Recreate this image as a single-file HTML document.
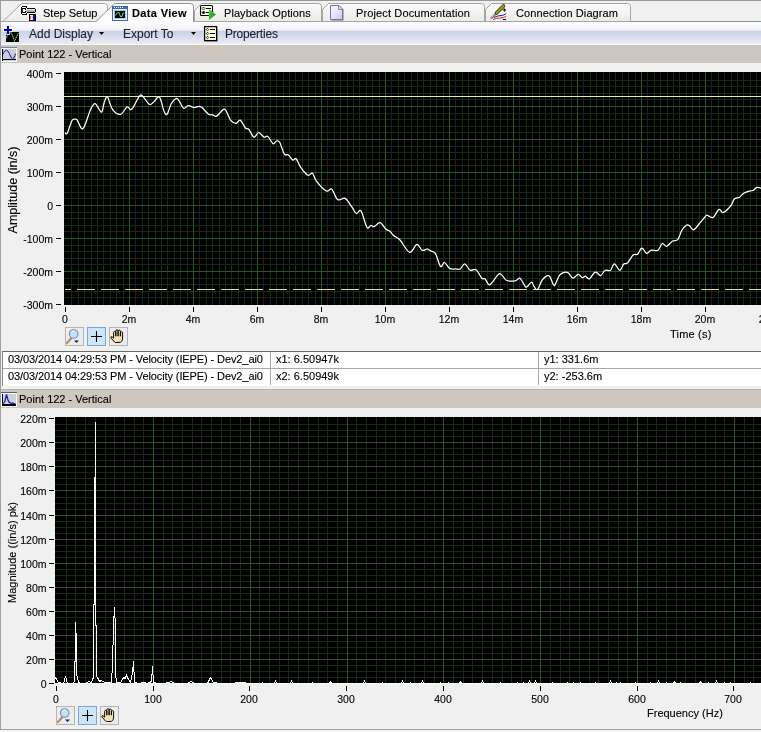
<!DOCTYPE html>
<html><head><meta charset="utf-8">
<style>
*{margin:0;padding:0;box-sizing:border-box}
html,body{width:761px;height:732px;overflow:hidden;background:#f0f0f0;font-family:"Liberation Sans",sans-serif;color:#000;-webkit-font-smoothing:antialiased;-webkit-text-stroke:0.12px currentColor}
#root{position:absolute;left:0;top:0;width:761px;height:732px;will-change:transform}
.a{position:absolute}
.t{position:absolute;font-size:11px;line-height:13px;white-space:nowrap;color:#000}
.yl{position:absolute;font-size:10.5px;line-height:12px;white-space:nowrap;text-align:right;color:#000}
.xl{position:absolute;font-size:10.5px;line-height:12px;width:60px;text-align:center;white-space:nowrap;color:#000}
.tk{position:absolute;background:#000}
.btn{position:absolute;width:19px;height:19px;border:1px solid #b5b5b5;background:#ececec}
.btn.on{border-color:#7ea6d2;background:#cde5f8}
</style></head><body><div id="root">
<!-- outer frame -->
<div class="a" style="left:0;top:0;width:761px;height:1px;background:#989898"></div>
<div class="a" style="left:0;top:0;width:1px;height:730px;background:#a0a0a0"></div>
<div class="a" style="left:0;top:729px;width:761px;height:1px;background:#a0a0a0"></div>
<div class="a" style="left:0;top:730px;width:761px;height:2px;background:#f4f4f4"></div>

<!-- tab strip -->
<div class="a" style="left:1px;top:21px;width:760px;height:1px;background:#8d959c"></div>
<svg class="a" style="left:0;top:0" width="761" height="22">
 <defs>
  <linearGradient id="tg" x1="0" y1="0" x2="0" y2="1"><stop offset="0" stop-color="#fbfbfa"/><stop offset="1" stop-color="#ecebe6"/></linearGradient>
 </defs>
 <!-- Step Setup -->
 <path d="M3,21.5 L21.5,3.5 L104.5,3.5 Q107.5,3.5 107.5,6.5 L107.5,21.5 Z" fill="url(#tg)" stroke="#a3a6a8"/>
 <!-- Playback Options -->
 <path d="M194.5,21.5 L194.5,10.5 L201.5,3.5 L318.5,3.5 Q321.5,3.5 321.5,6.5 L321.5,21.5 Z" fill="url(#tg)" stroke="#a3a6a8"/>
 <!-- Project Documentation -->
 <path d="M322.5,21.5 L322.5,9.5 L328.5,3.5 L481.5,3.5 Q484.5,3.5 484.5,6.5 L484.5,21.5 Z" fill="url(#tg)" stroke="#a3a6a8"/>
 <!-- Connection Diagram -->
 <path d="M485.5,21.5 L485.5,9.5 L491.5,3.5 L627.5,3.5 Q630.5,3.5 630.5,6.5 L630.5,21.5 Z" fill="url(#tg)" stroke="#a3a6a8"/>
 <!-- Data View active -->
 <path d="M95.5,22 L114.5,3.5 L190.5,3.5 Q193.5,3.5 193.5,6.5 L193.5,22" fill="#fcfcfc" stroke="#8d959c"/>
 <!-- icons: wrench -->
 <defs>
  <linearGradient id="wg" x1="0" y1="0" x2="0" y2="1"><stop offset="0" stop-color="#f4f4f4"/><stop offset="1" stop-color="#8c8c8c"/></linearGradient>
  <linearGradient id="dg" x1="0" y1="0" x2="1" y2="1"><stop offset="0" stop-color="#ffffff"/><stop offset="1" stop-color="#c8c8f0"/></linearGradient>
  <linearGradient id="ag" x1="0" y1="0" x2="1" y2="1"><stop offset="0" stop-color="#40e040"/><stop offset="1" stop-color="#108a10"/></linearGradient>
 </defs>
 <g shape-rendering="crispEdges">
  <rect x="22" y="6" width="5" height="1" fill="#000"/>
  <rect x="21" y="7" width="1" height="7" fill="#000"/>
  <rect x="22" y="14" width="5" height="1" fill="#000"/>
  <rect x="22" y="7" width="5" height="7" fill="#fff"/>
  <rect x="22" y="8" width="1" height="5" fill="#222"/>
  <rect x="23" y="8" width="3" height="1" fill="#000"/>
  <rect x="23" y="12" width="3" height="1" fill="#000"/>
  <rect x="26" y="7" width="1" height="1" fill="#000"/>
  <rect x="26" y="13" width="1" height="1" fill="#000"/>
  <rect x="25" y="9" width="1" height="1" fill="#000"/>
  <rect x="25" y="11" width="1" height="1" fill="#000"/>
  <rect x="27" y="8" width="8" height="1" fill="#000"/>
  <rect x="27" y="12" width="8" height="1" fill="#000"/>
  <rect x="26" y="9" width="9" height="3" fill="url(#wg)"/>
  <rect x="35" y="9" width="1" height="3" fill="#000"/>
  <rect x="29" y="14" width="7" height="7" fill="#000"/>
  <rect x="30" y="15" width="5" height="5" fill="#ece4ee"/>
  <rect x="30" y="16" width="1" height="3" fill="#d85050"/>
  <rect x="33" y="15" width="2" height="5" fill="#101890"/>
  <rect x="32" y="17" width="1" height="1" fill="#b0a8d0"/>
 </g>
 <!-- data view icon -->
 <g shape-rendering="crispEdges">
  <rect x="112" y="6" width="16" height="15" rx="1" fill="#3a6cb0"/>
  <rect x="113" y="9" width="14" height="11" fill="#e8f4ff"/>
  <rect x="114" y="10" width="12" height="9" fill="#a9c6e6"/>
  <rect x="115" y="11" width="10" height="7" fill="#000"/>
  <rect x="114" y="7" width="1" height="1" fill="#fff"/><rect x="116" y="7" width="1" height="1" fill="#fff"/><rect x="118" y="7" width="1" height="1" fill="#fff"/><rect x="120" y="7" width="1" height="1" fill="#fff"/><rect x="122" y="7" width="1" height="1" fill="#fff"/>
 </g>
 <path d="M115.5,15.5 L117,13 L119,12.5 L120.5,16.5 L122,16.5 L123,13 L124.5,13" fill="none" stroke="#7be07b" stroke-width="1"/>
 <!-- playback icon -->
 <rect x="200.5" y="5.5" width="12" height="10" rx="1" fill="#ffffe8" stroke="#000" stroke-width="1.1"/>
 <path d="M203.5,7 l1.5,1.5 l-1.5,1.5 l-1.5,-1.5 z" fill="#fff" stroke="#000" stroke-width="0.8"/>
 <path d="M203.5,11 l1.5,1.5 l-1.5,1.5 l-1.5,-1.5 z" fill="#000" stroke="#000" stroke-width="0.8"/>
 <path d="M206,8.5 h5 M206,12.5 h3" stroke="#000" stroke-width="1"/>
 <path d="M209,9 L216,14.5 L209,20 Z" fill="url(#ag)"/>
 <!-- doc icon -->
 <path d="M331.5,5.5 L339.5,5.5 L343.5,9.5 L343.5,20.5 L331.5,20.5 Z" fill="#6a6a9a"/>
 <path d="M330.5,5.5 L338.5,5.5 L342.5,9.5 L342.5,19.5 L330.5,19.5 Z" fill="url(#dg)" stroke="#7272a8" stroke-width="1"/>
 <path d="M338.5,5.5 L338.5,9.5 L342.5,9.5" fill="#d8d8f0" stroke="#7272a8" stroke-width="0.8"/>
 <!-- connection icon -->
 <path d="M491,18.5 L497,12.5" stroke="#707070" stroke-width="2"/>
 <path d="M491.5,17.5 L496.5,12.5" stroke="#d8d8c8" stroke-width="0.8"/>
 <path d="M496.5,13 L503.5,6" stroke="#2a2a00" stroke-width="3.6" stroke-linecap="round"/>
 <path d="M496.5,13 L503.5,6" stroke="#a0a020" stroke-width="2.2" stroke-linecap="round"/>
 <path d="M494,17.5 Q498,15.5 501,15.5 T506,13.5" fill="none" stroke="#1c1ca8" stroke-width="1"/>
 <path d="M493,19.5 Q497,18 500,18 T506,16.5" fill="none" stroke="#d83030" stroke-width="1"/>
 <path d="M503,10 h3 M504.5,8.5 v3 M503,19.5 h3" stroke="#000" stroke-width="1.1"/>
</svg>
<div class="t" style="left:43px;top:7px">Step Setup</div>
<div class="t" style="left:132px;top:7px;font-weight:bold;letter-spacing:0.35px">Data View</div>
<div class="t" style="left:224px;top:7px;letter-spacing:0.07px">Playback Options</div>
<div class="t" style="left:356px;top:7px;letter-spacing:0.13px">Project Documentation</div>
<div class="t" style="left:516px;top:7px;letter-spacing:0.1px">Connection Diagram</div>

<!-- toolbar -->
<div class="a" style="left:1px;top:22px;width:760px;height:23px;background:linear-gradient(#fdfdfe 0px,#f1f2f8 8px,#cdd1e5 9.5px,#d5d8ea 13px,#e6e8f2 20px,#eceef5 22px,#fafafc 22px)"></div>
<svg class="a" style="left:0;top:22px" width="240" height="23">
 <rect x="6" y="10" width="13" height="10" fill="#000"/>
 <path d="M6.5,16 Q8,10 11.5,11 L14.5,19 L18.5,11" fill="none" stroke="#74d074" stroke-width="1.1" stroke-dasharray="1.6,0.6"/>
 <path d="M3,8 h10 M8,3 v10" stroke="#fff" stroke-width="3.6" opacity="0.85"/>
 <path d="M4,8 h8 M8,4 v8" stroke="#0000b0" stroke-width="2.1"/>
 <path d="M99,10 h5 l-2.5,3 z" fill="#000"/>
 <path d="M191,10 h5 l-2.5,3 z" fill="#000"/>
 <rect x="204.6" y="4.6" width="12" height="14" fill="#ffffe4" stroke="#000" stroke-width="1.3"/>
 <path d="M207.5,6.2 l1.3,1.3 l-1.3,1.3 l-1.3,-1.3 z M207.5,10.2 l1.3,1.3 l-1.3,1.3 l-1.3,-1.3 z M207.5,14.2 l1.3,1.3 l-1.3,1.3 l-1.3,-1.3 z" fill="#fff" stroke="#000" stroke-width="0.8"/>
 <path d="M210,7.5 h5 M210,11.5 h5 M210,15.5 h5" stroke="#000" stroke-width="1.1"/>
 <path d="M217.5,5.5 v14 h-12" fill="none" stroke="#555" stroke-width="0.8" opacity="0.5"/>
</svg>
<div class="a" style="left:29px;top:27px;font-size:12px;line-height:14px;color:#1e2030;white-space:nowrap">Add Display</div>
<div class="a" style="left:123px;top:27px;font-size:12px;line-height:14px;color:#1e2030;white-space:nowrap">Export To</div>
<div class="a" style="left:225px;top:27px;font-size:12px;line-height:14px;color:#1e2030;white-space:nowrap;letter-spacing:-0.2px">Properties</div>

<!-- header 1 -->
<div class="a" style="left:1px;top:45px;width:760px;height:18px;background:#cec7bd"></div>
<svg class="a" style="left:0;top:45px" width="20" height="18">
 <g shape-rendering="crispEdges">
 <rect x="1" y="2" width="16" height="1" fill="#6688a8"/>
 <rect x="1" y="3" width="16" height="14" fill="#fbfbff"/>
 <rect x="2" y="4" width="14" height="12" fill="#cdcdd6"/>
 <rect x="2" y="4" width="1" height="12" fill="#000"/>
 <rect x="2" y="14" width="14" height="1" fill="#000"/>
 </g>
 <path d="M3,9 Q5.5,3 8.5,7 L12,14 Q13.5,15 15.5,8.5" fill="none" stroke="#1c1ca8" stroke-width="1.2" stroke-dasharray="1.4,0.5"/>
</svg>
<div class="t" style="left:19px;top:48px;color:#000">Point 122 - Vertical</div>

<!-- plot 1 -->
<svg class="a" style="left:0;top:0" width="761" height="310" shape-rendering="crispEdges">
 <rect x="64" y="72" width="697" height="233" fill="#000"/>
 <rect x="71" y="72" width="1" height="233" fill="#172817"/>
<rect x="78" y="72" width="1" height="233" fill="#172817"/>
<rect x="84" y="72" width="1" height="233" fill="#172817"/>
<rect x="91" y="72" width="1" height="233" fill="#172817"/>
<rect x="97" y="72" width="1" height="233" fill="#172817"/>
<rect x="103" y="72" width="1" height="233" fill="#172817"/>
<rect x="110" y="72" width="1" height="233" fill="#172817"/>
<rect x="116" y="72" width="1" height="233" fill="#172817"/>
<rect x="123" y="72" width="1" height="233" fill="#172817"/>
<rect x="135" y="72" width="1" height="233" fill="#172817"/>
<rect x="142" y="72" width="1" height="233" fill="#172817"/>
<rect x="148" y="72" width="1" height="233" fill="#172817"/>
<rect x="155" y="72" width="1" height="233" fill="#172817"/>
<rect x="161" y="72" width="1" height="233" fill="#172817"/>
<rect x="167" y="72" width="1" height="233" fill="#172817"/>
<rect x="174" y="72" width="1" height="233" fill="#172817"/>
<rect x="180" y="72" width="1" height="233" fill="#172817"/>
<rect x="187" y="72" width="1" height="233" fill="#172817"/>
<rect x="199" y="72" width="1" height="233" fill="#172817"/>
<rect x="206" y="72" width="1" height="233" fill="#172817"/>
<rect x="212" y="72" width="1" height="233" fill="#172817"/>
<rect x="219" y="72" width="1" height="233" fill="#172817"/>
<rect x="225" y="72" width="1" height="233" fill="#172817"/>
<rect x="231" y="72" width="1" height="233" fill="#172817"/>
<rect x="238" y="72" width="1" height="233" fill="#172817"/>
<rect x="244" y="72" width="1" height="233" fill="#172817"/>
<rect x="251" y="72" width="1" height="233" fill="#172817"/>
<rect x="263" y="72" width="1" height="233" fill="#172817"/>
<rect x="270" y="72" width="1" height="233" fill="#172817"/>
<rect x="276" y="72" width="1" height="233" fill="#172817"/>
<rect x="283" y="72" width="1" height="233" fill="#172817"/>
<rect x="289" y="72" width="1" height="233" fill="#172817"/>
<rect x="295" y="72" width="1" height="233" fill="#172817"/>
<rect x="302" y="72" width="1" height="233" fill="#172817"/>
<rect x="308" y="72" width="1" height="233" fill="#172817"/>
<rect x="315" y="72" width="1" height="233" fill="#172817"/>
<rect x="327" y="72" width="1" height="233" fill="#172817"/>
<rect x="334" y="72" width="1" height="233" fill="#172817"/>
<rect x="340" y="72" width="1" height="233" fill="#172817"/>
<rect x="347" y="72" width="1" height="233" fill="#172817"/>
<rect x="353" y="72" width="1" height="233" fill="#172817"/>
<rect x="359" y="72" width="1" height="233" fill="#172817"/>
<rect x="366" y="72" width="1" height="233" fill="#172817"/>
<rect x="372" y="72" width="1" height="233" fill="#172817"/>
<rect x="379" y="72" width="1" height="233" fill="#172817"/>
<rect x="391" y="72" width="1" height="233" fill="#172817"/>
<rect x="398" y="72" width="1" height="233" fill="#172817"/>
<rect x="404" y="72" width="1" height="233" fill="#172817"/>
<rect x="411" y="72" width="1" height="233" fill="#172817"/>
<rect x="417" y="72" width="1" height="233" fill="#172817"/>
<rect x="423" y="72" width="1" height="233" fill="#172817"/>
<rect x="430" y="72" width="1" height="233" fill="#172817"/>
<rect x="436" y="72" width="1" height="233" fill="#172817"/>
<rect x="443" y="72" width="1" height="233" fill="#172817"/>
<rect x="455" y="72" width="1" height="233" fill="#172817"/>
<rect x="462" y="72" width="1" height="233" fill="#172817"/>
<rect x="468" y="72" width="1" height="233" fill="#172817"/>
<rect x="475" y="72" width="1" height="233" fill="#172817"/>
<rect x="481" y="72" width="1" height="233" fill="#172817"/>
<rect x="487" y="72" width="1" height="233" fill="#172817"/>
<rect x="494" y="72" width="1" height="233" fill="#172817"/>
<rect x="500" y="72" width="1" height="233" fill="#172817"/>
<rect x="507" y="72" width="1" height="233" fill="#172817"/>
<rect x="519" y="72" width="1" height="233" fill="#172817"/>
<rect x="526" y="72" width="1" height="233" fill="#172817"/>
<rect x="532" y="72" width="1" height="233" fill="#172817"/>
<rect x="539" y="72" width="1" height="233" fill="#172817"/>
<rect x="545" y="72" width="1" height="233" fill="#172817"/>
<rect x="551" y="72" width="1" height="233" fill="#172817"/>
<rect x="558" y="72" width="1" height="233" fill="#172817"/>
<rect x="564" y="72" width="1" height="233" fill="#172817"/>
<rect x="571" y="72" width="1" height="233" fill="#172817"/>
<rect x="583" y="72" width="1" height="233" fill="#172817"/>
<rect x="590" y="72" width="1" height="233" fill="#172817"/>
<rect x="596" y="72" width="1" height="233" fill="#172817"/>
<rect x="603" y="72" width="1" height="233" fill="#172817"/>
<rect x="609" y="72" width="1" height="233" fill="#172817"/>
<rect x="615" y="72" width="1" height="233" fill="#172817"/>
<rect x="622" y="72" width="1" height="233" fill="#172817"/>
<rect x="628" y="72" width="1" height="233" fill="#172817"/>
<rect x="635" y="72" width="1" height="233" fill="#172817"/>
<rect x="647" y="72" width="1" height="233" fill="#172817"/>
<rect x="654" y="72" width="1" height="233" fill="#172817"/>
<rect x="660" y="72" width="1" height="233" fill="#172817"/>
<rect x="667" y="72" width="1" height="233" fill="#172817"/>
<rect x="673" y="72" width="1" height="233" fill="#172817"/>
<rect x="679" y="72" width="1" height="233" fill="#172817"/>
<rect x="686" y="72" width="1" height="233" fill="#172817"/>
<rect x="692" y="72" width="1" height="233" fill="#172817"/>
<rect x="699" y="72" width="1" height="233" fill="#172817"/>
<rect x="711" y="72" width="1" height="233" fill="#172817"/>
<rect x="718" y="72" width="1" height="233" fill="#172817"/>
<rect x="724" y="72" width="1" height="233" fill="#172817"/>
<rect x="731" y="72" width="1" height="233" fill="#172817"/>
<rect x="737" y="72" width="1" height="233" fill="#172817"/>
<rect x="743" y="72" width="1" height="233" fill="#172817"/>
<rect x="750" y="72" width="1" height="233" fill="#172817"/>
<rect x="756" y="72" width="1" height="233" fill="#172817"/>
<rect x="64" y="80" width="697" height="1" fill="#172817"/>
<rect x="64" y="86" width="697" height="1" fill="#172817"/>
<rect x="64" y="93" width="697" height="1" fill="#172817"/>
<rect x="64" y="99" width="697" height="1" fill="#172817"/>
<rect x="64" y="113" width="697" height="1" fill="#172817"/>
<rect x="64" y="119" width="697" height="1" fill="#172817"/>
<rect x="64" y="126" width="697" height="1" fill="#172817"/>
<rect x="64" y="132" width="697" height="1" fill="#172817"/>
<rect x="64" y="146" width="697" height="1" fill="#172817"/>
<rect x="64" y="152" width="697" height="1" fill="#172817"/>
<rect x="64" y="159" width="697" height="1" fill="#172817"/>
<rect x="64" y="165" width="697" height="1" fill="#172817"/>
<rect x="64" y="179" width="697" height="1" fill="#172817"/>
<rect x="64" y="185" width="697" height="1" fill="#172817"/>
<rect x="64" y="192" width="697" height="1" fill="#172817"/>
<rect x="64" y="198" width="697" height="1" fill="#172817"/>
<rect x="64" y="212" width="697" height="1" fill="#172817"/>
<rect x="64" y="218" width="697" height="1" fill="#172817"/>
<rect x="64" y="225" width="697" height="1" fill="#172817"/>
<rect x="64" y="231" width="697" height="1" fill="#172817"/>
<rect x="64" y="245" width="697" height="1" fill="#172817"/>
<rect x="64" y="251" width="697" height="1" fill="#172817"/>
<rect x="64" y="258" width="697" height="1" fill="#172817"/>
<rect x="64" y="264" width="697" height="1" fill="#172817"/>
<rect x="64" y="278" width="697" height="1" fill="#172817"/>
<rect x="64" y="284" width="697" height="1" fill="#172817"/>
<rect x="64" y="291" width="697" height="1" fill="#172817"/>
<rect x="64" y="297" width="697" height="1" fill="#172817"/>
<rect x="129" y="72" width="1" height="233" fill="#285628"/>
<rect x="193" y="72" width="1" height="233" fill="#285628"/>
<rect x="257" y="72" width="1" height="233" fill="#285628"/>
<rect x="321" y="72" width="1" height="233" fill="#285628"/>
<rect x="385" y="72" width="1" height="233" fill="#285628"/>
<rect x="449" y="72" width="1" height="233" fill="#285628"/>
<rect x="513" y="72" width="1" height="233" fill="#285628"/>
<rect x="577" y="72" width="1" height="233" fill="#285628"/>
<rect x="641" y="72" width="1" height="233" fill="#285628"/>
<rect x="705" y="72" width="1" height="233" fill="#285628"/>
<rect x="64" y="106" width="697" height="1" fill="#285628"/>
<rect x="64" y="139" width="697" height="1" fill="#285628"/>
<rect x="64" y="172" width="697" height="1" fill="#285628"/>
<rect x="64" y="205" width="697" height="1" fill="#285628"/>
<rect x="64" y="238" width="697" height="1" fill="#285628"/>
<rect x="64" y="271" width="697" height="1" fill="#285628"/>
 <rect x="64" y="96" width="697" height="1" fill="#dde9b6"/>
 <rect x="65" y="289" width="6" height="1" fill="#d8e0a8"/>
<rect x="77" y="289" width="18" height="1" fill="#d8e0a8"/>
<rect x="101" y="289" width="18" height="1" fill="#d8e0a8"/>
<rect x="125" y="289" width="18" height="1" fill="#d8e0a8"/>
<rect x="149" y="289" width="18" height="1" fill="#d8e0a8"/>
<rect x="173" y="289" width="18" height="1" fill="#d8e0a8"/>
<rect x="197" y="289" width="18" height="1" fill="#d8e0a8"/>
<rect x="221" y="289" width="18" height="1" fill="#d8e0a8"/>
<rect x="245" y="289" width="18" height="1" fill="#d8e0a8"/>
<rect x="269" y="289" width="18" height="1" fill="#d8e0a8"/>
<rect x="293" y="289" width="18" height="1" fill="#d8e0a8"/>
<rect x="317" y="289" width="18" height="1" fill="#d8e0a8"/>
<rect x="341" y="289" width="18" height="1" fill="#d8e0a8"/>
<rect x="365" y="289" width="18" height="1" fill="#d8e0a8"/>
<rect x="389" y="289" width="18" height="1" fill="#d8e0a8"/>
<rect x="413" y="289" width="18" height="1" fill="#d8e0a8"/>
<rect x="437" y="289" width="18" height="1" fill="#d8e0a8"/>
<rect x="461" y="289" width="18" height="1" fill="#d8e0a8"/>
<rect x="485" y="289" width="18" height="1" fill="#d8e0a8"/>
<rect x="509" y="289" width="18" height="1" fill="#d8e0a8"/>
<rect x="533" y="289" width="18" height="1" fill="#d8e0a8"/>
<rect x="557" y="289" width="18" height="1" fill="#d8e0a8"/>
<rect x="581" y="289" width="18" height="1" fill="#d8e0a8"/>
<rect x="605" y="289" width="18" height="1" fill="#d8e0a8"/>
<rect x="629" y="289" width="18" height="1" fill="#d8e0a8"/>
<rect x="653" y="289" width="18" height="1" fill="#d8e0a8"/>
<rect x="677" y="289" width="18" height="1" fill="#d8e0a8"/>
<rect x="701" y="289" width="18" height="1" fill="#d8e0a8"/>
<rect x="725" y="289" width="18" height="1" fill="#d8e0a8"/>
<rect x="749" y="289" width="18" height="1" fill="#d8e0a8"/>
</svg>
<svg class="a" style="left:0;top:0" width="761" height="310">
 <path d="M65.00,132.60 C65.38,132.70 66.15,135.18 67.30,133.20 C68.45,131.22 70.58,123.03 71.90,120.70 C73.22,118.37 74.33,119.32 75.20,119.20 C76.07,119.08 75.80,118.43 77.10,120.00 C78.40,121.57 80.80,130.23 83.00,128.60 C85.20,126.97 88.32,114.35 90.30,110.20 C92.28,106.05 93.27,103.58 94.90,103.70 C96.53,103.82 98.90,109.60 100.10,110.90 C101.30,112.20 101.43,112.82 102.10,111.50 C102.77,110.18 103.22,105.40 104.10,103.00 C104.98,100.60 105.98,96.00 107.40,97.10 C108.82,98.20 110.42,106.72 112.60,109.60 C114.78,112.48 118.08,114.85 120.50,114.40 C122.92,113.95 125.45,107.70 127.10,106.90 C128.75,106.10 129.42,109.48 130.40,109.60 C131.38,109.72 131.47,109.90 133.00,107.60 C134.53,105.30 137.97,97.67 139.60,95.80 C141.23,93.93 141.17,94.98 142.80,96.40 C144.43,97.82 147.63,103.32 149.40,104.30 C151.17,105.28 151.75,103.50 153.40,102.30 C155.05,101.10 157.55,95.67 159.30,97.10 C161.05,98.53 162.80,108.02 163.90,110.90 C165.00,113.78 165.23,114.07 165.90,114.40 C166.57,114.73 167.02,114.68 167.90,112.90 C168.78,111.12 169.78,106.12 171.20,103.70 C172.62,101.28 175.08,98.85 176.40,98.40 C177.72,97.95 177.88,99.35 179.10,101.00 C180.32,102.65 182.17,107.53 183.70,108.30 C185.23,109.07 186.55,105.72 188.30,105.60 C190.05,105.48 192.45,107.48 194.20,107.60 C195.95,107.72 197.50,106.30 198.80,106.30 C200.10,106.30 200.37,106.28 202.00,107.60 C203.63,108.92 206.83,113.00 208.60,114.20 C210.37,115.40 211.28,114.48 212.60,114.80 C213.92,115.12 214.75,116.97 216.50,116.10 C218.25,115.23 221.57,110.58 223.10,109.60 C224.63,108.62 224.38,108.35 225.70,110.20 C227.02,112.05 229.25,118.50 231.00,120.70 C232.75,122.90 234.67,123.50 236.20,123.40 C237.73,123.30 238.67,119.33 240.20,120.10 C241.73,120.87 243.98,126.47 245.40,128.00 C246.82,129.53 247.27,127.77 248.70,129.30 C250.13,130.83 252.35,136.67 254.00,137.20 C255.65,137.73 256.95,132.52 258.60,132.50 C260.25,132.48 262.37,136.45 263.90,137.10 C265.43,137.75 266.27,135.30 267.80,136.40 C269.33,137.50 271.67,142.93 273.10,143.70 C274.53,144.47 275.30,141.23 276.40,141.00 C277.50,140.77 278.38,140.10 279.70,142.30 C281.02,144.50 282.88,152.12 284.30,154.20 C285.72,156.28 286.78,153.82 288.20,154.80 C289.62,155.78 291.48,159.43 292.80,160.10 C294.12,160.77 294.78,157.60 296.10,158.80 C297.42,160.00 298.73,164.57 300.70,167.30 C302.67,170.03 305.93,174.22 307.90,175.20 C309.87,176.18 311.08,172.22 312.50,173.20 C313.92,174.18 314.10,178.13 316.40,181.10 C318.70,184.07 323.77,189.68 326.30,191.00 C328.83,192.32 329.85,187.70 331.60,189.00 C333.35,190.30 335.40,197.02 336.80,198.80 C338.20,200.58 338.58,199.77 340.00,199.70 C341.42,199.63 343.33,197.20 345.30,198.40 C347.27,199.60 349.95,204.38 351.80,206.90 C353.65,209.42 354.87,212.83 356.40,213.50 C357.93,214.17 359.25,208.60 361.00,210.90 C362.75,213.20 365.25,224.90 366.90,227.30 C368.55,229.70 369.68,225.42 370.90,225.30 C372.12,225.18 372.67,227.03 374.20,226.60 C375.73,226.17 378.13,222.25 380.10,222.70 C382.07,223.15 384.37,227.88 386.00,229.30 C387.63,230.72 388.58,230.12 389.90,231.20 C391.22,232.28 392.25,234.37 393.90,235.80 C395.55,237.23 397.18,237.05 399.80,239.80 C402.42,242.55 406.75,251.53 409.60,252.30 C412.45,253.07 414.82,244.73 416.90,244.40 C418.98,244.07 420.35,249.53 422.10,250.30 C423.85,251.07 426.08,248.95 427.40,249.00 C428.72,249.05 428.68,249.88 430.00,250.60 C431.32,251.32 433.55,250.67 435.30,253.30 C437.05,255.93 438.97,264.87 440.50,266.40 C442.03,267.93 442.97,262.17 444.50,262.50 C446.03,262.83 447.85,267.32 449.70,268.40 C451.55,269.48 453.85,268.90 455.60,269.00 C457.35,269.10 458.67,269.87 460.20,269.00 C461.73,268.13 463.15,263.58 464.80,263.80 C466.45,264.02 468.23,269.32 470.10,270.30 C471.97,271.28 474.03,268.38 476.00,269.70 C477.97,271.02 480.37,276.67 481.90,278.20 C483.43,279.73 483.88,277.80 485.20,278.90 C486.52,280.00 487.40,285.68 489.80,284.80 C492.20,283.92 496.87,274.37 499.60,273.60 C502.33,272.83 503.57,279.00 506.20,280.20 C508.83,281.40 513.10,281.13 515.40,280.80 C517.70,280.47 518.40,277.32 520.00,278.20 C521.60,279.08 523.83,284.67 525.00,286.10 C526.17,287.53 525.90,287.45 527.00,286.80 C528.10,286.15 530.40,282.20 531.60,282.20 C532.80,282.20 533.22,285.60 534.20,286.80 C535.18,288.00 536.18,290.50 537.50,289.40 C538.82,288.30 540.47,282.50 542.10,280.20 C543.73,277.90 545.98,276.15 547.30,275.60 C548.62,275.05 548.90,275.27 550.00,276.90 C551.10,278.53 552.92,284.42 553.90,285.40 C554.88,286.38 554.92,284.55 555.90,282.80 C556.88,281.05 558.38,276.65 559.80,274.90 C561.22,273.15 562.97,272.62 564.40,272.30 C565.83,271.98 566.97,272.02 568.40,273.00 C569.83,273.98 571.37,277.98 573.00,278.20 C574.63,278.42 576.67,274.40 578.20,274.30 C579.73,274.20 581.00,277.28 582.20,277.60 C583.40,277.92 584.20,275.98 585.40,276.20 C586.60,276.42 587.97,279.43 589.40,278.90 C590.83,278.37 592.80,274.10 594.00,273.00 C595.20,271.90 595.50,271.87 596.60,272.30 C597.70,272.73 599.17,275.93 600.60,275.60 C602.03,275.27 603.57,271.18 605.20,270.30 C606.83,269.42 608.87,271.38 610.40,270.30 C611.93,269.22 612.85,263.80 614.40,263.80 C615.95,263.80 618.15,270.27 619.70,270.30 C621.25,270.33 622.38,265.23 623.70,264.00 C625.02,262.77 626.03,264.40 627.60,262.90 C629.17,261.40 631.45,256.45 633.10,255.00 C634.75,253.55 636.18,255.25 637.50,254.20 C638.82,253.15 640.08,249.62 641.00,248.70 C641.92,247.78 642.08,247.92 643.00,248.70 C643.92,249.48 645.12,253.15 646.50,253.40 C647.88,253.65 649.38,250.73 651.30,250.20 C653.22,249.67 656.17,251.32 658.00,250.20 C659.83,249.08 660.85,244.15 662.30,243.50 C663.75,242.85 664.98,246.72 666.70,246.30 C668.42,245.88 670.75,242.12 672.60,241.00 C674.45,239.88 676.27,241.37 677.80,239.60 C679.33,237.83 680.37,232.80 681.80,230.40 C683.23,228.00 685.10,225.97 686.40,225.20 C687.70,224.43 688.40,225.03 689.60,225.80 C690.80,226.57 691.83,230.33 693.60,229.80 C695.37,229.27 698.57,224.42 700.20,222.60 C701.83,220.78 702.35,220.12 703.40,218.90 C704.45,217.68 705.58,215.77 706.50,215.30 C707.42,214.83 707.78,215.77 708.90,216.10 C710.02,216.43 711.50,218.42 713.20,217.30 C714.90,216.18 717.45,210.18 719.10,209.40 C720.75,208.62 721.12,213.25 723.10,212.60 C725.08,211.95 729.17,207.73 731.00,205.50 C732.83,203.27 732.67,200.58 734.10,199.20 C735.53,197.82 738.02,198.18 739.60,197.20 C741.18,196.22 742.15,194.28 743.60,193.30 C745.05,192.32 746.73,191.77 748.30,191.30 C749.87,190.83 751.55,191.15 753.00,190.50 C754.45,189.85 755.50,187.73 757.00,187.40 C758.50,187.07 761.17,188.32 762.00,188.50" fill="none" stroke="#fff" stroke-width="1.25" stroke-linejoin="round"/>
</svg>
<div class="yl" style="top:68px;right:708px">400m</div>
<div class="tk" style="left:56px;top:73px;width:5px;height:1px"></div>
<div class="yl" style="top:101px;right:708px">300m</div>
<div class="tk" style="left:56px;top:106px;width:5px;height:1px"></div>
<div class="yl" style="top:134px;right:708px">200m</div>
<div class="tk" style="left:56px;top:139px;width:5px;height:1px"></div>
<div class="yl" style="top:167px;right:708px">100m</div>
<div class="tk" style="left:56px;top:172px;width:5px;height:1px"></div>
<div class="yl" style="top:200px;right:708px">0</div>
<div class="tk" style="left:56px;top:205px;width:5px;height:1px"></div>
<div class="yl" style="top:233px;right:708px">-100m</div>
<div class="tk" style="left:56px;top:238px;width:5px;height:1px"></div>
<div class="yl" style="top:266px;right:708px">-200m</div>
<div class="tk" style="left:56px;top:271px;width:5px;height:1px"></div>
<div class="yl" style="top:299px;right:708px">-300m</div>
<div class="tk" style="left:56px;top:304px;width:5px;height:1px"></div>
<div class="xl" style="left:35px;top:313px">0</div>
<div class="tk" style="left:65px;top:307px;width:1px;height:5px"></div>
<div class="xl" style="left:99px;top:313px">2m</div>
<div class="tk" style="left:129px;top:307px;width:1px;height:5px"></div>
<div class="xl" style="left:163px;top:313px">4m</div>
<div class="tk" style="left:193px;top:307px;width:1px;height:5px"></div>
<div class="xl" style="left:227px;top:313px">6m</div>
<div class="tk" style="left:257px;top:307px;width:1px;height:5px"></div>
<div class="xl" style="left:291px;top:313px">8m</div>
<div class="tk" style="left:321px;top:307px;width:1px;height:5px"></div>
<div class="xl" style="left:355px;top:313px">10m</div>
<div class="tk" style="left:385px;top:307px;width:1px;height:5px"></div>
<div class="xl" style="left:419px;top:313px">12m</div>
<div class="tk" style="left:449px;top:307px;width:1px;height:5px"></div>
<div class="xl" style="left:483px;top:313px">14m</div>
<div class="tk" style="left:513px;top:307px;width:1px;height:5px"></div>
<div class="xl" style="left:547px;top:313px">16m</div>
<div class="tk" style="left:577px;top:307px;width:1px;height:5px"></div>
<div class="xl" style="left:611px;top:313px">18m</div>
<div class="tk" style="left:641px;top:307px;width:1px;height:5px"></div>
<div class="xl" style="left:675px;top:313px">20m</div>
<div class="tk" style="left:705px;top:307px;width:1px;height:5px"></div>
<div class="xl" style="left:739px;top:313px">22m</div>
<div class="tk" style="left:769px;top:307px;width:1px;height:5px"></div>
<div class="a" style="left:-37.5px;top:183px;width:100px;text-align:center;transform:rotate(-90deg);font-size:12.5px;line-height:14px;white-space:nowrap">Amplitude (in/s)</div>
<div class="t" style="left:670px;top:328px;letter-spacing:0.2px">Time (s)</div>
<div class="btn" style="left:65px;top:327px"></div>
<div class="btn on" style="left:87px;top:327px"></div>
<div class="btn" style="left:109px;top:327px"></div>
<svg class="a" style="left:65px;top:327px" width="64" height="19">
 <path d="M2,16 L6,11.5" stroke="#c08860" stroke-width="2.2" stroke-linecap="round"/>
 <circle cx="8.7" cy="7" r="4.3" fill="#c6def4" stroke="#6f8fb0" stroke-width="1.1"/>
 <path d="M6.5,5.5 a2.5,2.5 0 0 1 3,-1.5" stroke="#fff" stroke-width="1" fill="none"/>
 <path d="M9,13.5 h5 l-2.5,2.5 z" fill="#14206a"/>
 <path d="M26,9.5 h11 M31.5,4 v11" stroke="#000" stroke-width="1.1"/>
 <path d="M49.5,15 L46,11 Q45.3,9.6 46.8,9.6 L48.6,11.2 L48.6,5.6 Q48.6,4.4 49.7,4.4 Q50.8,4.4 50.8,5.6 L50.8,9.2 L50.8,3.9 Q50.8,2.7 51.95,2.7 Q53.1,2.7 53.1,3.9 L53.1,9.2 L53.1,4.3 Q53.1,3.1 54.25,3.1 Q55.4,3.1 55.4,4.3 L55.4,9.2 L55.4,5.8 Q55.4,4.7 56.5,4.7 Q57.6,4.7 57.6,5.8 L57.6,11 Q57.6,15.5 54,15.5 L50.5,15.5 Z" fill="#f4e2b4" stroke="#000" stroke-width="0.95"/>
</svg>

<!-- table -->
<div class="a" style="left:2px;top:351px;width:759px;height:35px;background:#fff;border-top:1px solid #6a6a6a;border-left:1px solid #8a8a8a"></div>
<div class="a" style="left:3px;top:368px;width:758px;height:1px;background:#a8a8a8"></div>
<div class="a" style="left:270px;top:352px;width:1px;height:33px;background:#a8a8a8"></div>
<div class="a" style="left:538px;top:352px;width:1px;height:33px;background:#a8a8a8"></div>
<div class="t" style="left:8px;top:353px;letter-spacing:-0.1px">03/03/2014 04:29:53 PM - Velocity (IEPE) - Dev2_ai0</div>
<div class="t" style="left:8px;top:370px;letter-spacing:-0.1px">03/03/2014 04:29:53 PM - Velocity (IEPE) - Dev2_ai0</div>
<div class="t" style="left:276px;top:353px">x1: 6.50947k</div>
<div class="t" style="left:276px;top:370px">x2: 6.50949k</div>
<div class="t" style="left:544px;top:353px">y1: 331.6m</div>
<div class="t" style="left:544px;top:370px">y2: -253.6m</div>

<!-- header 2 -->
<div class="a" style="left:1px;top:389px;width:760px;height:1px;background:#b8b4ac"></div>
<div class="a" style="left:1px;top:390px;width:760px;height:18px;background:#cec7bd"></div>
<svg class="a" style="left:0;top:389px" width="20" height="19">
 <g shape-rendering="crispEdges">
 <rect x="1" y="3" width="16" height="1" fill="#4a6680"/>
 <rect x="1" y="4" width="16" height="14" fill="#fbfbff"/>
 <rect x="2" y="5" width="14" height="11" fill="#cfd0dc"/>
 <rect x="2" y="5" width="1" height="12" fill="#000"/>
 <rect x="2" y="15" width="14" height="2" fill="#000"/>
 </g>
 <path d="M3,15 L5,12 L6.5,5.5 L8,11 L9,13 L11,14.5 L12.5,14 L15.5,15" fill="none" stroke="#1c1cb0" stroke-width="1.3"/>
</svg>
<div class="t" style="left:19px;top:393px">Point 122 - Vertical</div>

<!-- plot 2 -->
<svg class="a" style="left:0;top:0" width="761" height="690" shape-rendering="crispEdges">
 <rect x="55" y="417" width="706" height="266" fill="#000"/>
 <rect x="66" y="417" width="1" height="266" fill="#172817"/>
<rect x="75" y="417" width="1" height="266" fill="#172817"/>
<rect x="85" y="417" width="1" height="266" fill="#172817"/>
<rect x="95" y="417" width="1" height="266" fill="#172817"/>
<rect x="105" y="417" width="1" height="266" fill="#172817"/>
<rect x="114" y="417" width="1" height="266" fill="#172817"/>
<rect x="124" y="417" width="1" height="266" fill="#172817"/>
<rect x="134" y="417" width="1" height="266" fill="#172817"/>
<rect x="143" y="417" width="1" height="266" fill="#172817"/>
<rect x="163" y="417" width="1" height="266" fill="#172817"/>
<rect x="172" y="417" width="1" height="266" fill="#172817"/>
<rect x="182" y="417" width="1" height="266" fill="#172817"/>
<rect x="192" y="417" width="1" height="266" fill="#172817"/>
<rect x="201" y="417" width="1" height="266" fill="#172817"/>
<rect x="211" y="417" width="1" height="266" fill="#172817"/>
<rect x="221" y="417" width="1" height="266" fill="#172817"/>
<rect x="230" y="417" width="1" height="266" fill="#172817"/>
<rect x="240" y="417" width="1" height="266" fill="#172817"/>
<rect x="259" y="417" width="1" height="266" fill="#172817"/>
<rect x="269" y="417" width="1" height="266" fill="#172817"/>
<rect x="279" y="417" width="1" height="266" fill="#172817"/>
<rect x="288" y="417" width="1" height="266" fill="#172817"/>
<rect x="298" y="417" width="1" height="266" fill="#172817"/>
<rect x="308" y="417" width="1" height="266" fill="#172817"/>
<rect x="318" y="417" width="1" height="266" fill="#172817"/>
<rect x="327" y="417" width="1" height="266" fill="#172817"/>
<rect x="337" y="417" width="1" height="266" fill="#172817"/>
<rect x="356" y="417" width="1" height="266" fill="#172817"/>
<rect x="366" y="417" width="1" height="266" fill="#172817"/>
<rect x="376" y="417" width="1" height="266" fill="#172817"/>
<rect x="385" y="417" width="1" height="266" fill="#172817"/>
<rect x="395" y="417" width="1" height="266" fill="#172817"/>
<rect x="405" y="417" width="1" height="266" fill="#172817"/>
<rect x="414" y="417" width="1" height="266" fill="#172817"/>
<rect x="424" y="417" width="1" height="266" fill="#172817"/>
<rect x="434" y="417" width="1" height="266" fill="#172817"/>
<rect x="453" y="417" width="1" height="266" fill="#172817"/>
<rect x="463" y="417" width="1" height="266" fill="#172817"/>
<rect x="472" y="417" width="1" height="266" fill="#172817"/>
<rect x="482" y="417" width="1" height="266" fill="#172817"/>
<rect x="492" y="417" width="1" height="266" fill="#172817"/>
<rect x="502" y="417" width="1" height="266" fill="#172817"/>
<rect x="511" y="417" width="1" height="266" fill="#172817"/>
<rect x="521" y="417" width="1" height="266" fill="#172817"/>
<rect x="531" y="417" width="1" height="266" fill="#172817"/>
<rect x="550" y="417" width="1" height="266" fill="#172817"/>
<rect x="560" y="417" width="1" height="266" fill="#172817"/>
<rect x="569" y="417" width="1" height="266" fill="#172817"/>
<rect x="579" y="417" width="1" height="266" fill="#172817"/>
<rect x="589" y="417" width="1" height="266" fill="#172817"/>
<rect x="598" y="417" width="1" height="266" fill="#172817"/>
<rect x="608" y="417" width="1" height="266" fill="#172817"/>
<rect x="618" y="417" width="1" height="266" fill="#172817"/>
<rect x="627" y="417" width="1" height="266" fill="#172817"/>
<rect x="647" y="417" width="1" height="266" fill="#172817"/>
<rect x="656" y="417" width="1" height="266" fill="#172817"/>
<rect x="666" y="417" width="1" height="266" fill="#172817"/>
<rect x="676" y="417" width="1" height="266" fill="#172817"/>
<rect x="685" y="417" width="1" height="266" fill="#172817"/>
<rect x="695" y="417" width="1" height="266" fill="#172817"/>
<rect x="705" y="417" width="1" height="266" fill="#172817"/>
<rect x="715" y="417" width="1" height="266" fill="#172817"/>
<rect x="724" y="417" width="1" height="266" fill="#172817"/>
<rect x="744" y="417" width="1" height="266" fill="#172817"/>
<rect x="753" y="417" width="1" height="266" fill="#172817"/>
<rect x="55" y="424" width="706" height="1" fill="#172817"/>
<rect x="55" y="430" width="706" height="1" fill="#172817"/>
<rect x="55" y="436" width="706" height="1" fill="#172817"/>
<rect x="55" y="448" width="706" height="1" fill="#172817"/>
<rect x="55" y="454" width="706" height="1" fill="#172817"/>
<rect x="55" y="460" width="706" height="1" fill="#172817"/>
<rect x="55" y="472" width="706" height="1" fill="#172817"/>
<rect x="55" y="478" width="706" height="1" fill="#172817"/>
<rect x="55" y="484" width="706" height="1" fill="#172817"/>
<rect x="55" y="497" width="706" height="1" fill="#172817"/>
<rect x="55" y="503" width="706" height="1" fill="#172817"/>
<rect x="55" y="509" width="706" height="1" fill="#172817"/>
<rect x="55" y="521" width="706" height="1" fill="#172817"/>
<rect x="55" y="527" width="706" height="1" fill="#172817"/>
<rect x="55" y="533" width="706" height="1" fill="#172817"/>
<rect x="55" y="545" width="706" height="1" fill="#172817"/>
<rect x="55" y="551" width="706" height="1" fill="#172817"/>
<rect x="55" y="557" width="706" height="1" fill="#172817"/>
<rect x="55" y="569" width="706" height="1" fill="#172817"/>
<rect x="55" y="575" width="706" height="1" fill="#172817"/>
<rect x="55" y="581" width="706" height="1" fill="#172817"/>
<rect x="55" y="593" width="706" height="1" fill="#172817"/>
<rect x="55" y="599" width="706" height="1" fill="#172817"/>
<rect x="55" y="605" width="706" height="1" fill="#172817"/>
<rect x="55" y="617" width="706" height="1" fill="#172817"/>
<rect x="55" y="623" width="706" height="1" fill="#172817"/>
<rect x="55" y="629" width="706" height="1" fill="#172817"/>
<rect x="55" y="641" width="706" height="1" fill="#172817"/>
<rect x="55" y="647" width="706" height="1" fill="#172817"/>
<rect x="55" y="653" width="706" height="1" fill="#172817"/>
<rect x="55" y="665" width="706" height="1" fill="#172817"/>
<rect x="55" y="671" width="706" height="1" fill="#172817"/>
<rect x="55" y="677" width="706" height="1" fill="#172817"/>
<rect x="153" y="417" width="1" height="266" fill="#285628"/>
<rect x="250" y="417" width="1" height="266" fill="#285628"/>
<rect x="347" y="417" width="1" height="266" fill="#285628"/>
<rect x="443" y="417" width="1" height="266" fill="#285628"/>
<rect x="540" y="417" width="1" height="266" fill="#285628"/>
<rect x="637" y="417" width="1" height="266" fill="#285628"/>
<rect x="734" y="417" width="1" height="266" fill="#285628"/>
<rect x="55" y="442" width="706" height="1" fill="#285628"/>
<rect x="55" y="466" width="706" height="1" fill="#285628"/>
<rect x="55" y="490" width="706" height="1" fill="#285628"/>
<rect x="55" y="515" width="706" height="1" fill="#285628"/>
<rect x="55" y="539" width="706" height="1" fill="#285628"/>
<rect x="55" y="563" width="706" height="1" fill="#285628"/>
<rect x="55" y="587" width="706" height="1" fill="#285628"/>
<rect x="55" y="611" width="706" height="1" fill="#285628"/>
<rect x="55" y="635" width="706" height="1" fill="#285628"/>
<rect x="55" y="659" width="706" height="1" fill="#285628"/>
</svg>
<svg class="a" style="left:0;top:0" width="761" height="690">
 <polyline points="55.5,677.5 56.5,679.5 58.5,682.5 63.5,683.5 65.5,676.5 67.5,683.5 72.5,683.5 74.5,681.5 74.5,661.5 75.5,661.5 75.5,622.5 76.5,643.5 76.5,673.5 78.5,682.5 80.5,683.5 85.5,683.5 88.5,681.5 91.5,682.5 92.5,679.5 93.5,677.5 93.5,604.5 94.5,604.5 94.5,477.5 95.5,477.5 95.5,422.5 95.5,625.5 96.5,625.5 96.5,676.5 97.5,677.5 99.5,681.5 101.5,680.5 104.5,682.5 111.5,682.5 112.5,664.5 113.5,625.5 114.5,607.5 115.5,628.5 115.5,673.5 116.5,682.5 120.5,682.5 122.5,679.5 123.5,677.5 125.5,678.5 126.5,674.5 127.5,677.5 128.5,679.5 130.5,682.5 132.5,672.5 133.5,661.5 134.5,682.5 138.5,683.5 143.5,682.5 147.5,683.5 151.5,681.5 152.5,666.5 153.5,682.5 157.5,683.5 164.5,683.5 171.5,681.5 174.5,683.5 186.5,683.5 191.5,681.5 194.5,683.5 207.5,683.5 210.5,677.5 213.5,682.5 220.5,683.5 230.5,683.5 240.5,682.5 250.5,683.5 261.5,683.5 262.5,682.5 263.5,683.5 274.5,683.5 275.5,680.5 276.5,683.5 290.5,683.5 291.5,680.5 292.5,683.5 311.5,683.5 312.5,682.5 313.5,683.5 329.5,683.5 330.5,681.5 331.5,683.5 363.5,683.5 364.5,680.5 365.5,683.5 381.5,683.5 382.5,682.5 383.5,683.5 401.5,683.5 402.5,680.5 403.5,683.5 409.5,683.5 410.5,682.5 411.5,683.5 421.5,683.5 422.5,680.5 423.5,683.5 439.5,683.5 440.5,682.5 441.5,683.5 447.5,683.5 448.5,682.5 449.5,683.5 459.5,683.5 460.5,681.5 461.5,683.5 481.5,683.5 482.5,680.5 483.5,683.5 499.5,683.5 500.5,682.5 501.5,683.5 516.5,683.5 517.5,682.5 518.5,683.5 522.5,683.5 523.5,682.5 524.5,683.5 528.5,683.5 529.5,680.5 530.5,683.5 534.5,683.5 535.5,680.5 536.5,683.5 551.5,683.5 552.5,682.5 553.5,683.5 566.5,683.5 567.5,682.5 568.5,683.5 572.5,683.5 573.5,682.5 574.5,683.5 579.5,683.5 580.5,682.5 581.5,683.5 594.5,683.5 595.5,682.5 596.5,683.5 609.5,683.5 610.5,680.5 611.5,683.5 615.5,683.5 616.5,682.5 617.5,683.5 619.5,683.5 620.5,682.5 621.5,683.5 634.5,683.5 635.5,682.5 636.5,683.5 649.5,683.5 650.5,682.5 651.5,683.5 657.5,683.5 658.5,680.5 659.5,683.5 665.5,683.5 666.5,682.5 667.5,683.5 673.5,683.5 674.5,681.5 675.5,683.5 679.5,683.5 680.5,682.5 681.5,683.5 699.5,683.5 700.5,681.5 701.5,683.5 707.5,683.5 708.5,682.5 709.5,683.5 715.5,683.5 716.5,680.5 717.5,683.5 723.5,683.5 724.5,682.5 725.5,683.5 729.5,683.5 730.5,682.5 731.5,683.5 749.5,683.5 750.5,682.5 751.5,683.5 761.0,683.5" fill="none" stroke="#fff" stroke-width="1" stroke-linejoin="round" shape-rendering="crispEdges"/>
</svg>
<div class="yl" style="top:413px;right:714.5px">220m</div>
<div class="tk" style="left:49px;top:418px;width:5px;height:1px"></div>
<div class="yl" style="top:437px;right:714.5px">200m</div>
<div class="tk" style="left:49px;top:442px;width:5px;height:1px"></div>
<div class="yl" style="top:461px;right:714.5px">180m</div>
<div class="tk" style="left:49px;top:466px;width:5px;height:1px"></div>
<div class="yl" style="top:485px;right:714.5px">160m</div>
<div class="tk" style="left:49px;top:490px;width:5px;height:1px"></div>
<div class="yl" style="top:510px;right:714.5px">140m</div>
<div class="tk" style="left:49px;top:515px;width:5px;height:1px"></div>
<div class="yl" style="top:534px;right:714.5px">120m</div>
<div class="tk" style="left:49px;top:539px;width:5px;height:1px"></div>
<div class="yl" style="top:558px;right:714.5px">100m</div>
<div class="tk" style="left:49px;top:563px;width:5px;height:1px"></div>
<div class="yl" style="top:582px;right:714.5px">80m</div>
<div class="tk" style="left:49px;top:587px;width:5px;height:1px"></div>
<div class="yl" style="top:606px;right:714.5px">60m</div>
<div class="tk" style="left:49px;top:611px;width:5px;height:1px"></div>
<div class="yl" style="top:630px;right:714.5px">40m</div>
<div class="tk" style="left:49px;top:635px;width:5px;height:1px"></div>
<div class="yl" style="top:654px;right:714.5px">20m</div>
<div class="tk" style="left:49px;top:659px;width:5px;height:1px"></div>
<div class="yl" style="top:678px;right:714.5px">0</div>
<div class="tk" style="left:49px;top:683px;width:5px;height:1px"></div>
<div class="xl" style="left:26px;top:693px">0</div>
<div class="tk" style="left:56px;top:686px;width:1px;height:5px"></div>
<div class="xl" style="left:123px;top:693px">100</div>
<div class="tk" style="left:153px;top:686px;width:1px;height:5px"></div>
<div class="xl" style="left:219px;top:693px">200</div>
<div class="tk" style="left:249px;top:686px;width:1px;height:5px"></div>
<div class="xl" style="left:316px;top:693px">300</div>
<div class="tk" style="left:346px;top:686px;width:1px;height:5px"></div>
<div class="xl" style="left:413px;top:693px">400</div>
<div class="tk" style="left:443px;top:686px;width:1px;height:5px"></div>
<div class="xl" style="left:510px;top:693px">500</div>
<div class="tk" style="left:540px;top:686px;width:1px;height:5px"></div>
<div class="xl" style="left:607px;top:693px">600</div>
<div class="tk" style="left:637px;top:686px;width:1px;height:5px"></div>
<div class="xl" style="left:703px;top:693px">700</div>
<div class="tk" style="left:733px;top:686px;width:1px;height:5px"></div>
<div class="a" style="left:-43px;top:546px;width:110px;text-align:center;transform:rotate(-90deg);font-size:11px;line-height:13px;white-space:nowrap">Magnitude ((in/s) pk)</div>
<div class="t" style="left:647px;top:707px">Frequency (Hz)</div>
<div class="btn" style="left:56px;top:706px"></div>
<div class="btn on" style="left:78px;top:706px"></div>
<div class="btn" style="left:100px;top:706px"></div>
<svg class="a" style="left:56px;top:706px" width="64" height="19">
 <path d="M2,16 L6,11.5" stroke="#c08860" stroke-width="2.2" stroke-linecap="round"/>
 <circle cx="8.7" cy="7" r="4.3" fill="#c6def4" stroke="#6f8fb0" stroke-width="1.1"/>
 <path d="M6.5,5.5 a2.5,2.5 0 0 1 3,-1.5" stroke="#fff" stroke-width="1" fill="none"/>
 <path d="M9,13.5 h5 l-2.5,2.5 z" fill="#14206a"/>
 <path d="M26,9.5 h11 M31.5,4 v11" stroke="#000" stroke-width="1.1"/>
 <path d="M49.5,15 L46,11 Q45.3,9.6 46.8,9.6 L48.6,11.2 L48.6,5.6 Q48.6,4.4 49.7,4.4 Q50.8,4.4 50.8,5.6 L50.8,9.2 L50.8,3.9 Q50.8,2.7 51.95,2.7 Q53.1,2.7 53.1,3.9 L53.1,9.2 L53.1,4.3 Q53.1,3.1 54.25,3.1 Q55.4,3.1 55.4,4.3 L55.4,9.2 L55.4,5.8 Q55.4,4.7 56.5,4.7 Q57.6,4.7 57.6,5.8 L57.6,11 Q57.6,15.5 54,15.5 L50.5,15.5 Z" fill="#f4e2b4" stroke="#000" stroke-width="0.95"/>
</svg>
</div></body></html>
